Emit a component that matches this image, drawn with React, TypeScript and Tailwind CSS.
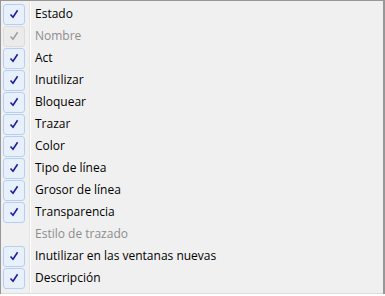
const items: { label: string; checked: boolean; disabled?: boolean }[] = [
  { label: "Estado", checked: true },
  { label: "Nombre", checked: true, disabled: true },
  { label: "Act", checked: true },
  { label: "Inutilizar", checked: true },
  { label: "Bloquear", checked: true },
  { label: "Trazar", checked: true },
  { label: "Color", checked: true },
  { label: "Tipo de línea", checked: true },
  { label: "Grosor de línea", checked: true },
  { label: "Transparencia", checked: true },
  { label: "Estilo de trazado", checked: false, disabled: true },
  { label: "Inutilizar en las ventanas nuevas", checked: true },
  { label: "Descripción", checked: true },
];

function Check({ disabled }: { disabled?: boolean }) {
  return (
    <div
      className={
        "flex h-[21px] w-[22px] items-center justify-center rounded-[3px] border " +
        (disabled ? "border-[#dcdcdc] bg-[#ebebeb]" : "border-[#b3d0f3] bg-[#e8f0fb]")
      }
    >
      <svg width="10" height="10" viewBox="0 0 10 10">
        <path
          d="M1.5 5.5 L4 8.2 L8.6 1.2"
          fill="none"
          stroke={disabled ? "#a0a0a0" : "#1c1ca6"}
          strokeWidth="1.6"
        />
      </svg>
    </div>
  );
}

export default function App() {
  return (
    <div className="h-[296px] w-[385px] overflow-hidden bg-white">
      <div className="flex h-[294px] w-[385px] flex-col border-t border-l border-r-2 border-[#979797] bg-[#f0f0f0] pt-[2px] font-['Open_Sans',sans-serif] text-[12px]">
        <div className="relative flex-1">
          <div className="absolute top-0 bottom-0 left-[28px] w-[1px] bg-[#e2e3e3]" />
          <div className="absolute top-0 bottom-0 left-[29px] w-[1px] bg-white" />
          {items.map((it) => (
            <div key={it.label} className="relative flex h-[22px] items-center">
              <div className="ml-[2px] w-[32px]">
                {it.checked && <Check disabled={it.disabled} />}
              </div>
              <span className={it.disabled ? "text-[#8d8d8d]" : "text-black"}>{it.label}</span>
            </div>
          ))}
        </div>
        <div className="h-[1px] bg-[#dcdcdc]" />
      </div>
    </div>
  );
}
